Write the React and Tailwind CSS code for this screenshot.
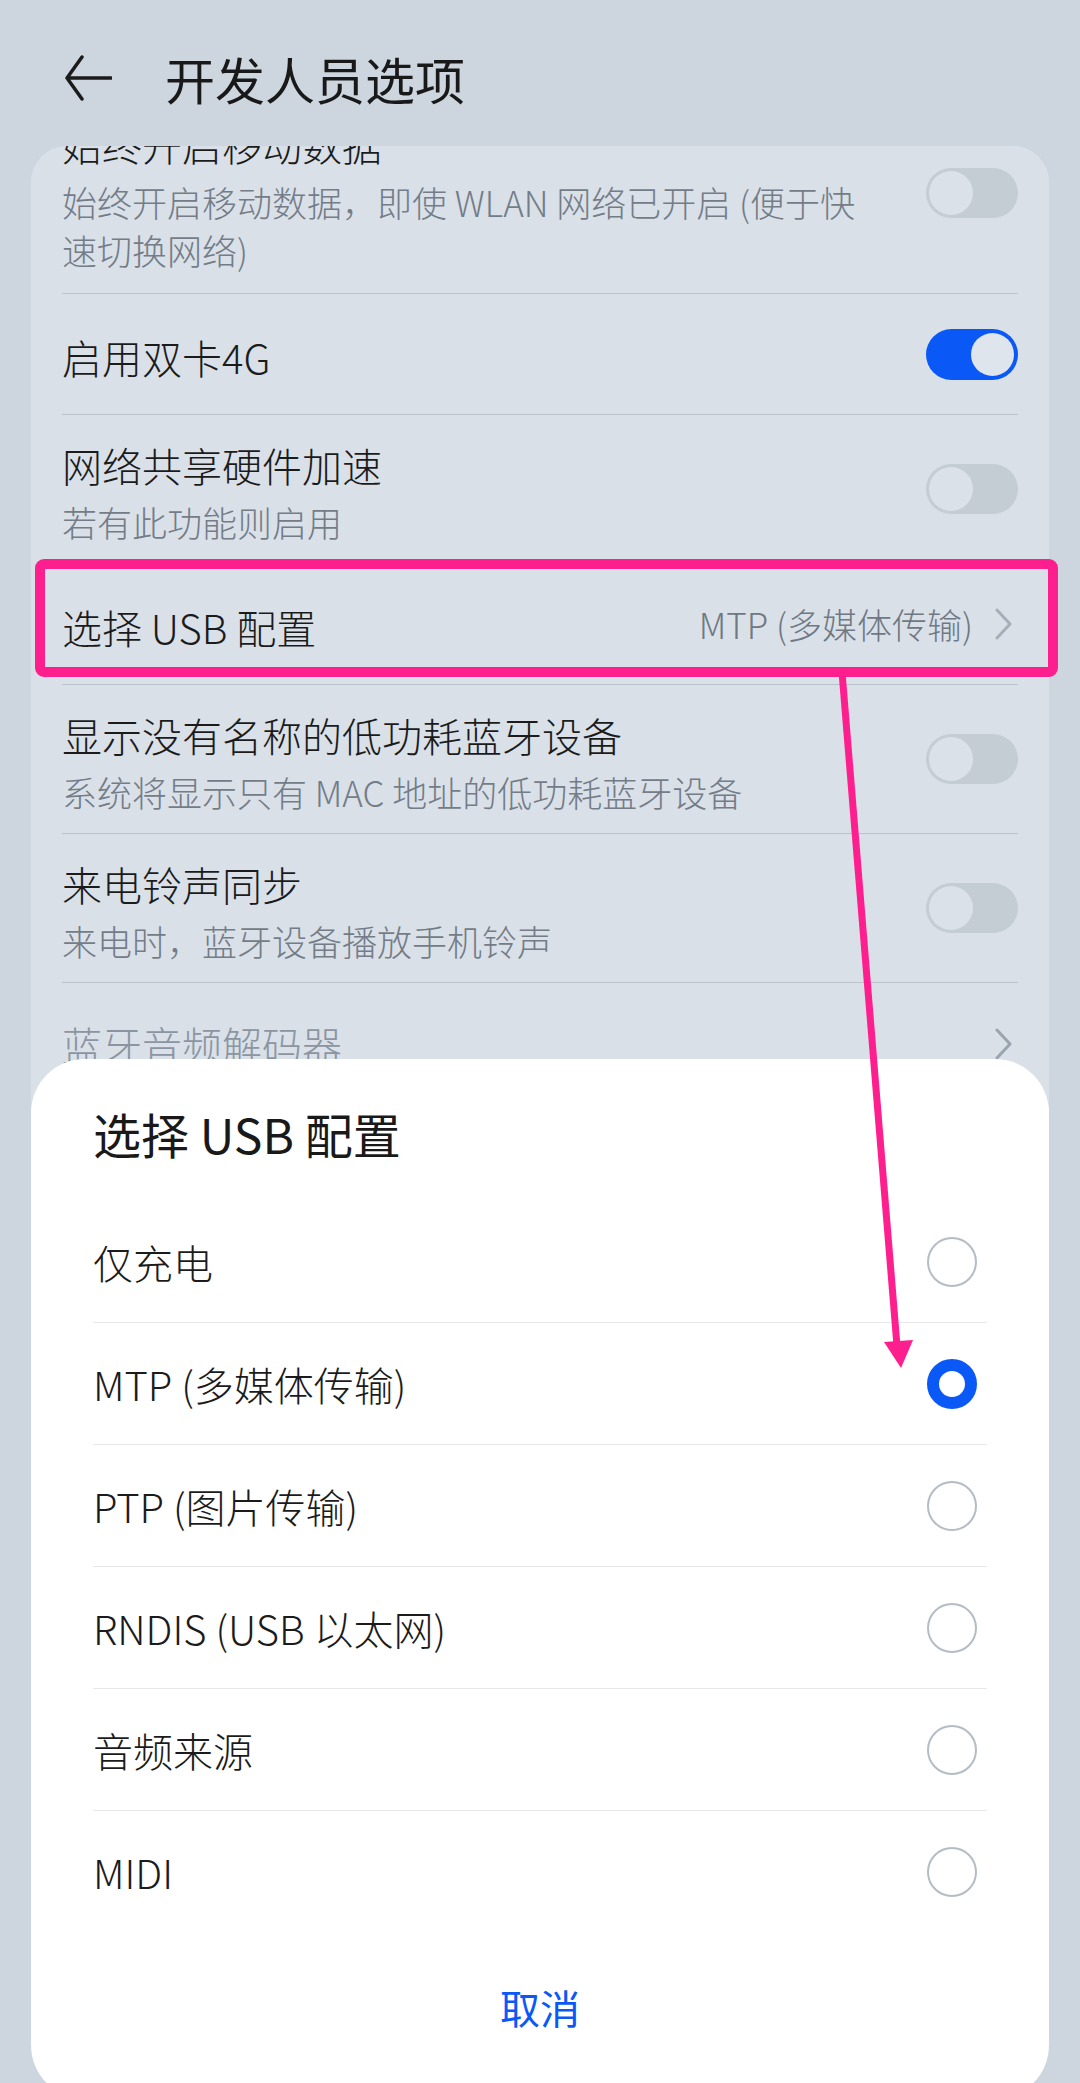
import React from 'react'

const font = "font-['Noto_Sans_CJK_SC','Noto_Sans',sans-serif]"

function Toggle({ on }) {
  if (on) {
    return (
      <div className="w-[92px] h-[51px] shrink-0 rounded-full bg-[#0a59f7] p-[4px] flex justify-end">
        <div className="w-[43px] h-[43px] rounded-full bg-[#dfe5ec]" />
      </div>
    )
  }
  return (
    <div className="w-[92px] h-[50px] shrink-0 rounded-full bg-[#c4ccd4] p-[3px] flex">
      <div className="w-[44px] h-[44px] rounded-full bg-[#dbe1e8]" />
    </div>
  )
}

function Chevron({ color = '#a6afb9' }) {
  return (
    <svg width="17" height="32" viewBox="0 0 17 32" className="shrink-0 mr-[6px]">
      <path d="M2 2 L15 16 L2 30" fill="none" stroke={color} strokeWidth="3" strokeLinecap="round" strokeLinejoin="round" />
    </svg>
  )
}

function Row({ title, sub, toggle, height = 'h-[149px]', children, last }) {
  return (
    <div className={`flex items-center ${height} ${last ? '' : 'border-b border-[#bac2cb]'}`}>
      <div className="flex-1 min-w-0 mt-[6px]">
        <div className="text-[40px] leading-[52px] text-[#1b1b1b] whitespace-nowrap">{title}</div>
        {sub && <div className="mt-[8px] text-[35px] leading-[46px] text-[#737c87] whitespace-nowrap">{sub}</div>}
      </div>
      {toggle !== undefined && <Toggle on={toggle} />}
      {children}
    </div>
  )
}

function Radio({ checked }) {
  return checked ? (
    <div className="w-[50px] h-[50px] mr-[10px] rounded-full border-[12px] border-[#0a59f7] bg-white shrink-0" />
  ) : (
    <div className="w-[50px] h-[50px] mr-[10px] rounded-full border-[2px] border-[#b4bcc4] shrink-0" />
  )
}

const options = ['仅充电', 'MTP (多媒体传输)', 'PTP (图片传输)', 'RNDIS (USB 以太网)', '音频来源', 'MIDI']

export default function App() {
  return (
    <div className={`relative w-[1080px] h-[2083px] overflow-hidden bg-[#cdd6df] font-light ${font}`}>
      {/* header */}
      <div className="h-[146px] pt-[48px] pl-[64px]">
        <div className="flex items-center h-[60px]">
          <svg width="48" height="46" viewBox="0 0 48 46" className="shrink-0">
            <path d="M18 2 L3 23 L18 44 M3 23 H47" fill="none" stroke="#1b1b1b" strokeWidth="3.5" strokeLinecap="round" strokeLinejoin="round" />
          </svg>
          <div className="ml-[53px] text-[50px] leading-[60px] text-[#191919] font-normal">开发人员选项</div>
        </div>
      </div>

      {/* settings card */}
      <div className="mx-[31px] rounded-t-[36px] overflow-hidden bg-[#d9e0e8] pb-[80px]">
        <div className="mt-[-53px] px-[31px]">
          <div className="flex items-center h-[201px] border-b border-[#bac2cb]">
            <div className="flex-1 min-w-0 mt-[6px]">
              <div className="text-[40px] leading-[52px] text-[#1b1b1b] whitespace-nowrap">始终开启移动数据</div>
              <div className="mt-[8px] text-[35px] leading-[48px] text-[#737c87] whitespace-nowrap">
                始终开启移动数据，即使 WLAN 网络已开启 (便于快
                <br />
                速切换网络)
              </div>
            </div>
            <Toggle on={false} />
          </div>
          <Row title="启用双卡4G" toggle={true} height="h-[121px]" />
          <Row title="网络共享硬件加速" sub="若有此功能则启用" toggle={false} />
          <Row title="选择 USB 配置" height="h-[121px]">
            <span className="ml-[22px] text-[35px] text-[#6f7883] whitespace-nowrap">MTP (多媒体传输)</span>
            <span className="ml-[22px] flex"><Chevron /></span>
          </Row>
          <Row title="显示没有名称的低功耗蓝牙设备" sub="系统将显示只有 MAC 地址的低功耗蓝牙设备" toggle={false} />
          <Row title="来电铃声同步" sub="来电时，蓝牙设备播放手机铃声" toggle={false} />
          <div className="flex items-center h-[121px]">
            <div className="flex-1 text-[40px] leading-[52px] text-[#8b95a1]">蓝牙音频解码器</div>
            <Chevron color="#9aa4ae" />
          </div>
        </div>
      </div>

      {/* bottom sheet dialog */}
      <div className="absolute left-[31px] top-[1059px] w-[1018px] h-[1040px] rounded-[54px] bg-white px-[62px]">
        <div className="pt-[42px] text-[48px] leading-[64px] text-[#191919] font-normal">选择 USB 配置</div>
        <div className="mt-[36px]">
          {options.map((o, i) => (
            <div
              key={o}
              className={`flex items-center justify-between h-[122px] ${i < options.length - 1 ? 'border-b border-[#e6e8eb]' : ''}`}
            >
              <span className="text-[40px] text-[#1b1b1b]">{o}</span>
              <Radio checked={i === 1} />
            </div>
          ))}
        </div>
        <div className="mt-[34px] h-[80px] flex items-center justify-center text-[40px] text-[#0a59f7] font-normal">取消</div>
      </div>

      {/* annotation */}
      <svg className="absolute inset-0 pointer-events-none" width="1080" height="2083" viewBox="0 0 1080 2083">
        <rect x="40" y="564" width="1013" height="108" rx="4" fill="none" stroke="#fe1f8f" strokeWidth="10" />
        <line x1="842" y1="672" x2="897" y2="1346" stroke="#fe1f8f" strokeWidth="7" />
        <polygon points="884,1342 913,1340 901,1368" fill="#fe1f8f" />
      </svg>
    </div>
  )
}
